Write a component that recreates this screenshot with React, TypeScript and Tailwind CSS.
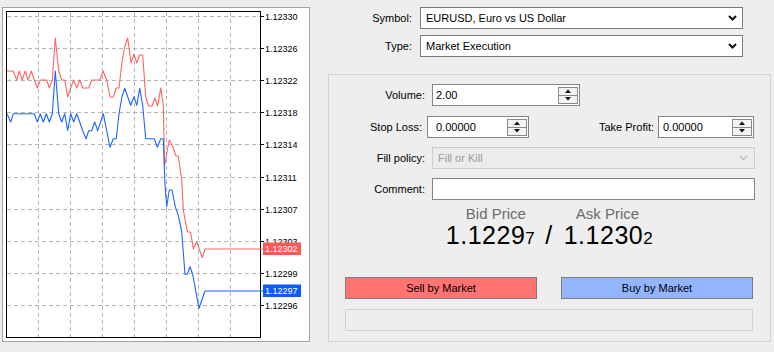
import React from 'react';

const RED: [number, number][] = [
  [7, 71], [13, 71], [16.7, 80], [19.3, 71], [22, 80], [25.3, 71], [28, 80], [31.3, 71], [34.3, 80], [37.3, 88],
  [40.3, 80], [46.7, 80], [49.3, 88], [52.3, 80], [55.3, 38], [58.7, 71], [61.7, 80], [64.7, 80], [67.7, 97],
  [70.7, 88], [73.7, 80], [76.7, 88], [79.7, 80], [82.7, 88], [88.7, 88], [91.7, 80], [100, 80], [103, 71],
  [106.7, 80], [110, 97], [113.3, 97], [116.3, 88], [119, 88], [122, 62], [124.7, 47], [127.7, 38], [131, 63],
  [134, 54], [136.7, 63], [139.7, 55], [142.7, 55], [145.7, 97], [148.7, 106], [152, 106], [155, 98],
  [157.7, 106], [160.7, 88], [163.3, 105], [164.5, 166], [169.3, 140], [173, 147], [176, 156], [178.3, 156],
  [181.7, 180], [182.3, 190], [183.3, 210], [187.3, 231.7], [190.7, 232.3], [193.3, 249], [196.7, 241.7],
  [202.3, 257.7], [205, 249], [263, 249],
];

const BLUE: [number, number][] = [
  [7, 113.7], [10.7, 122], [13.3, 113.7], [34.3, 113.7], [37.3, 122], [40.3, 113.7], [43.3, 122], [46.3, 113.7],
  [49.3, 122], [52.3, 113.7], [55.3, 71], [58.7, 113.7], [61.7, 122], [64.7, 113.7], [67.7, 130.7], [70.7, 113.7],
  [73.7, 122], [76.7, 113.7], [79.7, 122], [82.7, 130.7], [86, 138.7], [88.7, 130.7], [91.7, 130.7], [94.7, 122],
  [97.7, 130.7], [103.3, 113.7], [106.7, 130.7], [110, 147.3], [113.3, 138.7], [116.3, 138.7], [119, 113.7],
  [122, 96.7], [124.7, 88.3], [127.7, 96.7], [130.7, 105.3], [134, 96.7], [136.7, 105.3], [139.7, 88.3],
  [142.7, 105.3], [145.7, 138.7], [154.3, 138.7], [157.3, 147.3], [160.7, 138.7], [163.3, 138.7], [165, 185],
  [166.7, 206.7], [169.3, 190], [172, 190], [175.3, 206.7], [178.3, 215.7], [181.7, 231.7], [185, 274.3],
  [187.3, 274.3], [190, 266.7], [192.7, 274.3], [199, 308.3], [205, 291], [263, 291],
];

const GRID_Y = [16.5, 48.5, 80.5, 112.5, 144.5, 177.5, 209.5, 241.5, 273.5, 305.5];
const LEVELS = ['1.12330', '1.12326', '1.12322', '1.12318', '1.12314', '1.12311', '1.12307', '1.12303', '1.12299', '1.12296'];
const GRID_X = [38.5, 70.5, 102.5, 134.5, 166.5, 198.5, 230.5];

const pts = (p: [number, number][]) => p.map(([x, y]) => `${x},${y}`).join(' ');

function Chart() {
  return (
    <div className="h-[335px] w-[308px] border border-[#a3a3a3] bg-white">
      <svg width="306" height="333" viewBox="3 8 306 333" className="block">
        {GRID_Y.map((y) => (
          <line key={y} x1={7} x2={260} y1={y} y2={y} stroke="#b5b5b5" strokeDasharray="4 3" />
        ))}
        {GRID_X.map((x) => (
          <line key={x} x1={x} x2={x} y1={12} y2={337} stroke="#b5b5b5" strokeDasharray="4 3" />
        ))}
        <rect x={6.5} y={11.5} width={254} height={326} fill="none" stroke="#000" />
        <polyline points={pts(RED)} fill="none" stroke="#ff6464" strokeWidth={1.1} strokeLinejoin="round" />
        <polyline points={pts(BLUE)} fill="none" stroke="#1f66ff" strokeWidth={1.1} strokeLinejoin="round" />
        {GRID_Y.map((y, i) => (
          <g key={y}>
            <line x1={260} x2={264} y1={y} y2={y} stroke="#000" />
            <text x={265} y={y + 3.3} fontSize={9} fill="#000">
              {LEVELS[i]}
            </text>
          </g>
        ))}
        <rect x={263} y={242.5} width={38} height={12.5} fill="#ff5757" />
        <text x={265} y={252} fontSize={9} fill="#fff">1.12302</text>
        <rect x={263} y={284.5} width={38} height={12.5} fill="#0a5cff" />
        <text x={265} y={294} fontSize={9} fill="#fff">1.12297</text>
      </svg>
    </div>
  );
}

function Chevron({ disabled }: { disabled?: boolean }) {
  return (
    <svg width="9" height="6" viewBox="0 0 9 6" className="shrink-0">
      <path
        d="M1 1l3.5 3.5L8 1"
        fill="none"
        stroke={disabled ? '#bcbcbc' : '#111'}
        strokeWidth={disabled ? 1.2 : 2}
      />
    </svg>
  );
}

function Select({ value, width, disabled }: { value: string; width: number; disabled?: boolean }) {
  return (
    <div
      style={{ width }}
      className={
        disabled
          ? 'flex h-[22px] items-center justify-between border border-[#cdcdcd] bg-[#ececec] pl-[5px] pr-[6px] text-[#9b9b9b]'
          : 'flex h-[22px] items-center justify-between border border-[#7a7a7a] bg-white pl-[5px] pr-[5px] text-black'
      }
    >
      <span>{value}</span>
      <Chevron disabled={disabled} />
    </div>
  );
}

function Spinner() {
  return (
    <div className="flex h-[17px] w-[20px] flex-col border border-[#8a8a8a] bg-[#f4f4f4]">
      <div className="flex flex-1 items-center justify-center border-b border-[#8a8a8a]">
        <svg width="6" height="4" viewBox="0 0 6 4">
          <path d="M0 4L3 0.5L6 4z" fill="#111" />
        </svg>
      </div>
      <div className="flex flex-1 items-center justify-center">
        <svg width="6" height="4" viewBox="0 0 6 4">
          <path d="M0 0L3 3.5L6 0z" fill="#111" />
        </svg>
      </div>
    </div>
  );
}

function NumberInput({ value, width, pad }: { value: string; width: number; pad: number }) {
  return (
    <div style={{ width, paddingLeft: pad }} className="flex h-[22px] items-center border border-[#858585] bg-white pr-[1px]">
      <span className="flex-1">{value}</span>
      <Spinner />
    </div>
  );
}

export default function App() {
  return (
    <div className="flex h-[352px] w-[774px] bg-[#eeeeee] font-['Liberation_Sans',Arial,sans-serif] text-[11px] text-black">
      <div className="pl-[2px] pt-[7px]">
        <Chart />
      </div>

      <div className="flex flex-col pt-[7px]">
        <div className="flex items-center">
          <div className="w-[102px] text-right">Symbol:</div>
          <div className="ml-[8px]">
            <Select value="EURUSD, Euro vs US Dollar" width={323} />
          </div>
        </div>
        <div className="mt-[6px] flex items-center">
          <div className="w-[102px] text-right">Type:</div>
          <div className="ml-[8px]">
            <Select value="Market Execution" width={323} />
          </div>
        </div>

        <div className="ml-[18px] mt-[17px] flex h-[268px] w-[443px] flex-col border border-[#d4d4d4] pt-[9px]">
          <div className="flex items-center">
            <div className="w-[96px] text-right">Volume:</div>
            <div className="ml-[7px]">
              <NumberInput value="2.00" width={148} pad={3} />
            </div>
          </div>
          <div className="mt-[10px] flex items-center">
            <div className="w-[93px] text-right">Stop Loss:</div>
            <div className="ml-[5px]">
              <NumberInput value="0.00000" width={102} pad={8} />
            </div>
            <div className="w-[125px] text-right">Take Profit:</div>
            <div className="ml-[4px]">
              <NumberInput value="0.00000" width={96} pad={4} />
            </div>
          </div>
          <div className="mt-[9px] flex items-center">
            <div className="w-[96px] text-right">Fill policy:</div>
            <div className="ml-[7px]">
              <Select value="Fill or Kill" width={323} disabled />
            </div>
          </div>
          <div className="mt-[9px] flex items-center">
            <div className="w-[96px] text-right">Comment:</div>
            <div className="ml-[7px] h-[22px] w-[323px] border border-[#858585] bg-white" />
          </div>

          <div className="mt-[6px] flex justify-center gap-[50px] pl-[6px] text-[15px] leading-[15px] text-[#6b6b6b]">
            <span>Bid Price</span>
            <span>Ask Price</span>
          </div>
          <div className="mt-[2px] flex items-baseline justify-center text-[25px] leading-[24px] tracking-[0.5px] text-black">
            <span>
              1.1229<span className="text-[17px]">7</span>
            </span>
            <span className="ml-[10px] mr-[11px]">/</span>
            <span>
              1.1230<span className="text-[17px]">2</span>
            </span>
          </div>

          <div className="ml-[16px] mt-[26px] flex gap-[24px]">
            <div className="flex h-[22px] w-[192px] items-center justify-center border border-[#7c7c7c] bg-[#ff7373]">
              Sell by Market
            </div>
            <div className="flex h-[22px] w-[192px] items-center justify-center border border-[#7c7c7c] bg-[#93b4ff]">
              Buy by Market
            </div>
          </div>
          <div className="ml-[16px] mt-[10px] h-[22px] w-[408px] border border-[#d2d2d2]" />
        </div>
      </div>
    </div>
  );
}
